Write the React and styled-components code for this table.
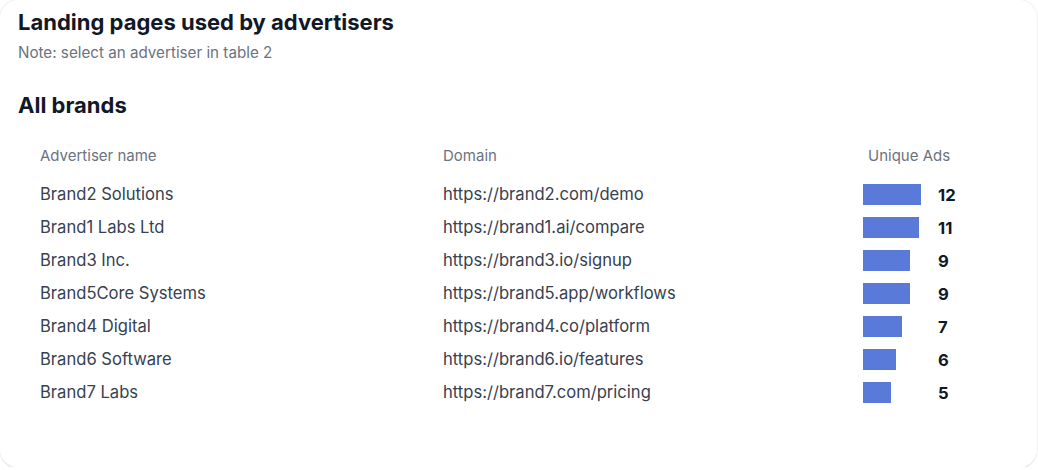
import styled, { createGlobalStyle } from 'styled-components';

const GlobalStyle = createGlobalStyle`
  html, body {
    margin: 0;
    padding: 0;
    background: #ffffff;
  }
  body {
    font-family: Inter, "Noto Sans", "Liberation Sans", sans-serif;
  }
`;

const rows = [
  { name: 'Brand2 Solutions', domain: 'https://brand2.com/demo', ads: 12, bar: 58 },
  { name: 'Brand1 Labs Ltd', domain: 'https://brand1.ai/compare', ads: 11, bar: 56 },
  { name: 'Brand3 Inc.', domain: 'https://brand3.io/signup', ads: 9, bar: 47 },
  { name: 'Brand5Core Systems', domain: 'https://brand5.app/workflows', ads: 9, bar: 47 },
  { name: 'Brand4 Digital', domain: 'https://brand4.co/platform', ads: 7, bar: 39 },
  { name: 'Brand6 Software', domain: 'https://brand6.io/features', ads: 6, bar: 33 },
  { name: 'Brand7 Labs', domain: 'https://brand7.com/pricing', ads: 5, bar: 28 }
];

const App = () => (
  <>
    <GlobalStyle />
    <Card>
      <Title>Landing pages used by advertisers</Title>
      <Note>Note: select an advertiser in table 2</Note>
      <Subtitle>All brands</Subtitle>
      <Table>
        <HeadRow>
          <HeadCell>Advertiser name</HeadCell>
          <HeadCell>Domain</HeadCell>
          <HeadCell $shift>Unique Ads</HeadCell>
        </HeadRow>
        {rows.map((row) => (
          <Row key={row.name}>
            <Cell>{row.name}</Cell>
            <Cell>{row.domain}</Cell>
            <AdsCell>
              <BarTrack>
                <Bar style={{ width: row.bar }} />
              </BarTrack>
              <Count>{row.ads}</Count>
            </AdsCell>
          </Row>
        ))}
      </Table>
    </Card>
  </>
);

const Card = styled.div`
  box-sizing: border-box;
  height: 467px;
  width: 1037px;
  padding: 8px 18px;
  background: #fff;
  border-radius: 18px;
  box-shadow: 0 0 0 1px #f1f1f3, 0 2px 0 #e3e3e5;
`;

const Title = styled.h1`
  margin: 0;
  font-size: 22px;
  line-height: 28px;
  font-weight: 700;
  color: #111827;
`;

const Note = styled.p`
  margin: 7px 0 0;
  font-size: 15.2px;
  line-height: 20px;
  color: #6b7280;
`;

const Subtitle = styled.h2`
  margin: 28px 0 0;
  font-size: 22px;
  line-height: 28px;
  font-weight: 700;
  color: #111827;
`;

const Table = styled.div`
  margin-top: 27px;
  padding-left: 22px;
  display: flex;
  flex-direction: column;
`;

const HeadRow = styled.div`
  display: grid;
  grid-template-columns: 403px 420px 1fr;
  margin-bottom: 12px;
`;

const HeadCell = styled.div`
  font-size: 15px;
  line-height: 20px;
  color: #6b7280;
  padding-left: ${(p) => (p.$shift ? '5px' : '0')};
`;

const Row = styled.div`
  display: grid;
  grid-template-columns: 403px 420px 1fr;
  align-items: center;
  height: 33px;
`;

const Cell = styled.div`
  font-size: 16.6px;
  line-height: 33px;
  color: #374151;
  white-space: nowrap;
`;

const AdsCell = styled.div`
  display: flex;
  align-items: center;
`;

const BarTrack = styled.div`
  width: 75px;
  display: flex;
  align-items: center;
`;

const Bar = styled.div`
  height: 21px;
  margin-top: -1px;
  background: #5a7ad9;
`;

const Count = styled.span`
  font-size: 16.6px;
  font-weight: 700;
  color: #111827;
`;

export default App;
